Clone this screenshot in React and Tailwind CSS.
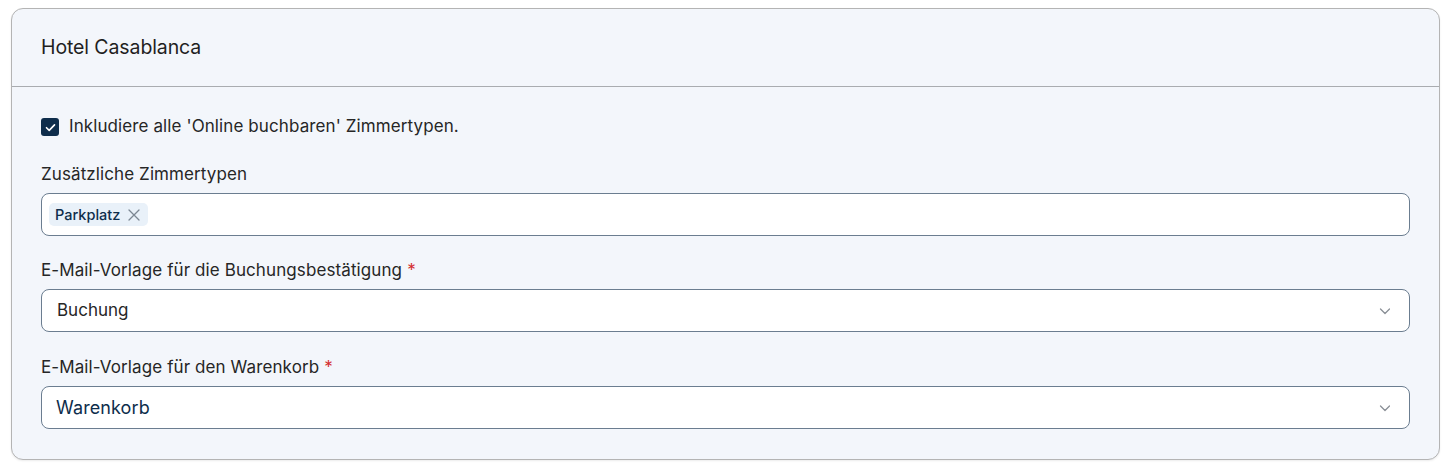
import React from "react";

function Chevron() {
  return (
    <svg width="14" height="14" viewBox="0 0 14 14" fill="none" className="text-[#8a8f96]">
      <path d="M2.5 5L7 9.5L11.5 5" stroke="currentColor" strokeWidth="1.3" strokeLinecap="round" strokeLinejoin="round" />
    </svg>
  );
}

function Label({ children, required }) {
  return (
    <div className="text-[17px] leading-[20px] text-[#262626] tracking-[0.1px]">
      {children}
      {required && <span className="text-[#d32f2f] ml-[5px]">*</span>}
    </div>
  );
}

export default function App() {
  return (
    <div className="w-[1449px] h-[467px] bg-white pt-[8px] pl-[11px]" style={{ fontFamily: "Inter, 'Noto Sans', sans-serif" }}>
      <div className="w-[1429px] h-[452px] rounded-[12px] border border-[#b4b4b4] bg-[#f3f6fb] shadow-[0_1px_2px_rgba(0,0,0,0.08)] overflow-hidden">
        <div className="h-[78px] border-b border-[#a9acb0] flex items-center pl-[29px]">
          <div className="text-[19.5px] text-[#1f1f1f] font-normal tracking-[-0.1px]">Hotel Casablanca</div>
        </div>
        <div className="pl-[29px] pr-[29px] pt-[29px]">
          <div className="flex items-center gap-[10px] h-[22px]">
            <div className="w-[18px] h-[18px] rounded-[3px] bg-[#0e2d4b] flex items-center justify-center">
              <svg width="13" height="13" viewBox="0 0 12 12" fill="none">
                <path d="M2.3 6.2L4.8 8.6L9.7 3.6" stroke="white" strokeWidth="1.5" strokeLinecap="round" strokeLinejoin="round" />
              </svg>
            </div>
            <div className="text-[17px] text-[#262626] tracking-[0.1px]">Inkludiere alle 'Online buchbaren' Zimmertypen.</div>
          </div>

          <div className="mt-[26px]">
            <Label>Zusätzliche Zimmertypen</Label>
            <div className="mt-[9px] h-[43px] w-[1369px] rounded-[8px] border border-[#6b7d90] bg-white flex items-center pl-[7px]">
              <div className="h-[23px] rounded-[5px] bg-[#e9f1f9] flex items-center pl-[6px] pr-[8px] gap-[8px]">
                <span className="text-[14.5px] text-[#0e2d4b] font-medium">Parkplatz</span>
                <svg width="12" height="12" viewBox="0 0 12 12" fill="none">
                  <path d="M1 1L11 11M11 1L1 11" stroke="#7c8793" strokeWidth="1.3" strokeLinecap="round" />
                </svg>
              </div>
            </div>
          </div>

          <div className="mt-[24px]">
            <Label required>E-Mail-Vorlage für die Buchungsbestätigung</Label>
            <div className="mt-[9px] h-[43px] w-[1369px] rounded-[8px] border border-[#6b7d90] bg-white flex items-center justify-between pl-[15px] pr-[17px]">
              <span className="text-[17px] text-[#262626] pt-[1px]">Buchung</span>
              <Chevron />
            </div>
          </div>

          <div className="mt-[25px]">
            <Label required>E-Mail-Vorlage für den Warenkorb</Label>
            <div className="mt-[9px] h-[43px] w-[1369px] rounded-[8px] border border-[#6b7d90] bg-white flex items-center justify-between pl-[14px] pr-[17px]">
              <span className="text-[18px] text-[#0e2d4b] tracking-[0.1px]">Warenkorb</span>
              <Chevron />
            </div>
          </div>
        </div>
      </div>
    </div>
  );
}
